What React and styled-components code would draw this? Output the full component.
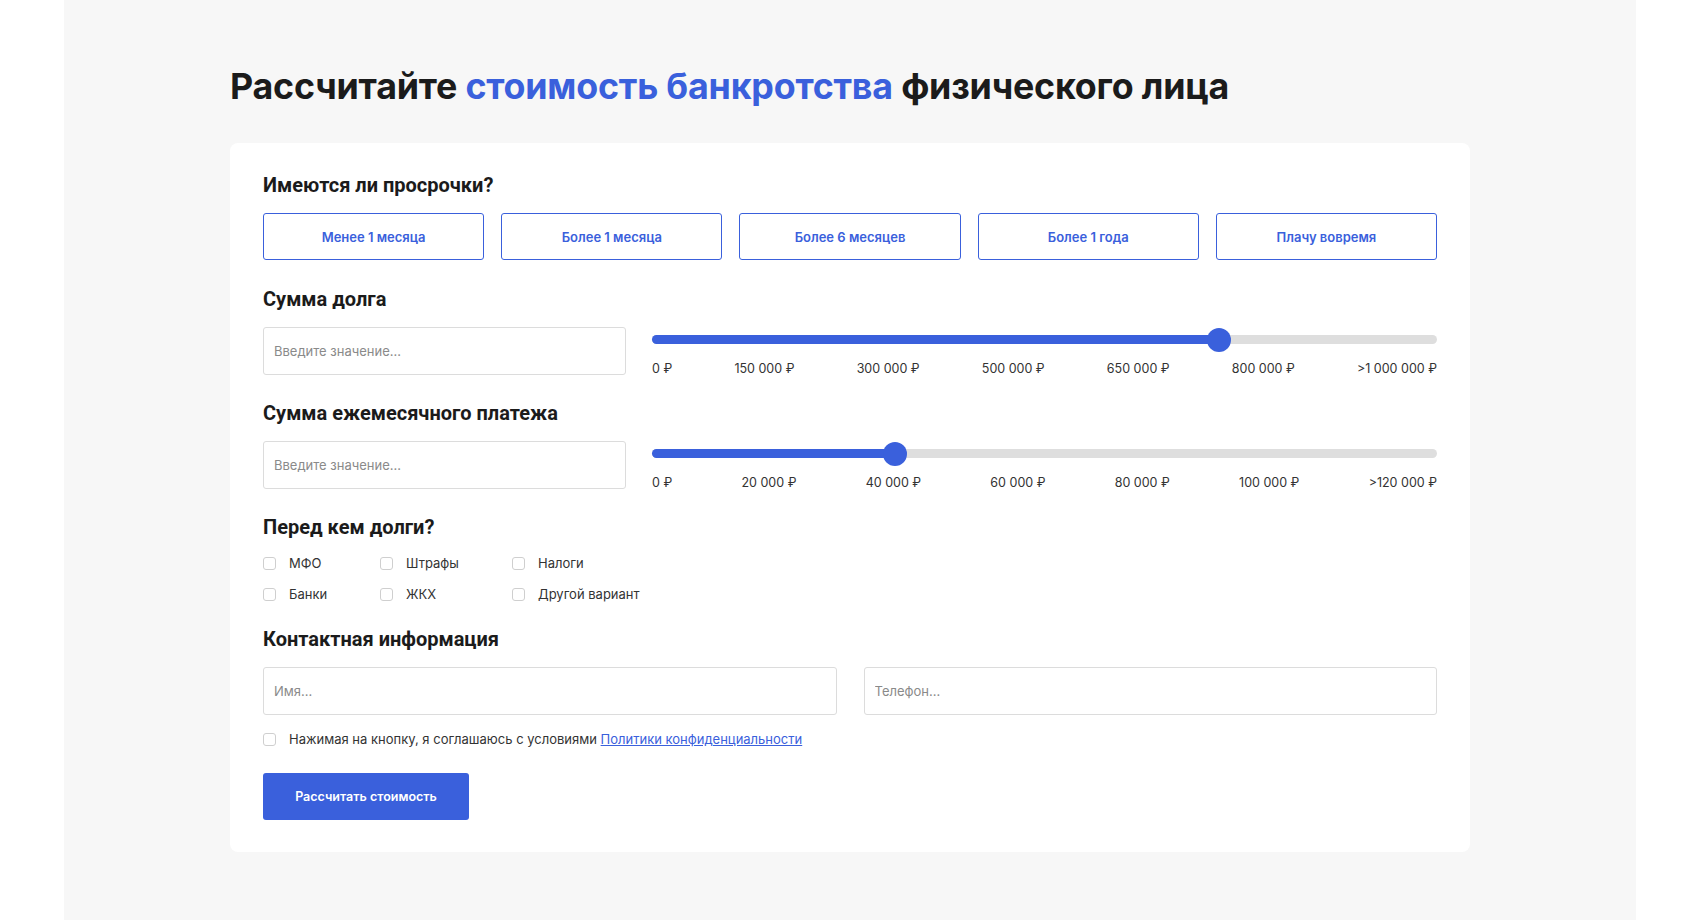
import React from "react";
import styled, { createGlobalStyle } from "styled-components";

const Global = createGlobalStyle`
  html, body { margin: 0; background: #fff; }
  * { box-sizing: border-box; }
`;
const BLUE = "#3a60dc";

const Page = styled.div`
  margin: 0 64px; min-height: 920px; background: #f7f7f7;
  padding: 64px 166px 68px 166px;
  font-family: Inter, "Noto Sans", sans-serif;
`;
const Title = styled.h1`
  margin: 0 0 35px; font-family: Inter, sans-serif; font-weight: 700; font-size: 35.8px; color: #1b1b1b; letter-spacing: -0.2px;
  span { color: ${BLUE}; }
`;
const Card = styled.div`
  background: #fff; border-radius: 8px; padding: 30px 33px 32px;
`;
const H = styled.h2`
  margin: 0 0 16px; font-family: Roboto, sans-serif; font-weight: 700; font-size: 20px; color: #1b1b1b;
`;
const Section = styled.div` margin-bottom: ${p => p.$mb ?? 24}px; `;
const Options = styled.div` display: grid; grid-template-columns: repeat(5, 1fr); gap: 17px; `;
const Opt = styled.button`
  height: 47px; background: #fff; border: 1px solid ${BLUE}; border-radius: 3px; color: ${BLUE};
  font-family: Inter, sans-serif; font-weight: 600; font-size: 13px;
`;
const Row = styled.div` display: grid; grid-template-columns: 363px 1fr; gap: 26px; align-items: start; `;
const Input = styled.input`
  width: 100%; height: 48px; border: 1px solid #dcdcdc; border-radius: 3px; padding: 0 10px;
  font-family: Inter, sans-serif; font-size: 13px; color: #333;
  &::placeholder { color: #8a8a8a; }
`;
const Slider = styled.div` padding-top: 8px; `;
const Track = styled.div`
  position: relative; height: 9px; border-radius: 5px; background: #dedede;
`;
const Fill = styled.div` height: 100%; border-radius: 5px; background: ${BLUE}; `;
const Thumb = styled.div`
  position: absolute; top: 50%; width: 24px; height: 24px; border-radius: 50%; background: ${BLUE};
  transform: translate(-50%, -50%);
`;
const Labels = styled.div`
  display: flex; justify-content: space-between; margin-top: 17px; font-size: 12.5px; color: #333;
`;
const Checks = styled.div`
  display: grid; grid-template-columns: 117px 132px auto; row-gap: 15px; justify-content: start;
`;
const Check = styled.label`
  display: flex; align-items: center; gap: 13px; font-size: 13px; color: #333;
`;
const Box = styled.span`
  width: 13px; height: 13px; border: 1px solid #cfcfcf; border-radius: 3px; flex: none;
`;
const Two = styled.div` display: grid; grid-template-columns: 1fr 1fr; gap: 27px; margin-bottom: 16px; `;
const Consent = styled(Check)` margin-bottom: 26px; a { color: ${BLUE}; } `;
const Submit = styled.button`
  width: 206px; height: 47px; border: 0; border-radius: 3px; background: ${BLUE}; color: #fff;
  font-family: Inter, sans-serif; font-weight: 600; font-size: 12.5px;
`;

function Range({ value, labels }) {
  return (
    <Slider>
      <Track>
        <Fill style={{ width: `${value}%` }} />
        <Thumb style={{ left: `${value}%` }} />
      </Track>
      <Labels>{labels.map(l => <span key={l}>{l}</span>)}</Labels>
    </Slider>
  );
}

export default function App() {
  return (
    <Page>
      <Global />
      <Title>Рассчитайте <span>стоимость банкротства</span> физического лица</Title>
      <Card>
        <Section $mb={27}>
          <H>Имеются ли просрочки?</H>
          <Options>
            {["Менее 1 месяца", "Более 1 месяца", "Более 6 месяцев", "Более 1 года", "Плачу вовремя"].map(t => <Opt key={t}>{t}</Opt>)}
          </Options>
        </Section>
        <Section $mb={25}>
          <H>Сумма долга</H>
          <Row>
            <Input placeholder="Введите значение..." />
            <Range value={72.2} labels={["0 ₽", "150 000 ₽", "300 000 ₽", "500 000 ₽", "650 000 ₽", "800 000 ₽", ">1 000 000 ₽"]} />
          </Row>
        </Section>
        <Section $mb={25}>
          <H>Сумма ежемесячного платежа</H>
          <Row>
            <Input placeholder="Введите значение..." />
            <Range value={31} labels={["0 ₽", "20 000 ₽", "40 000 ₽", "60 000 ₽", "80 000 ₽", "100 000 ₽", ">120 000 ₽"]} />
          </Row>
        </Section>
        <Section $mb={25}>
          <H>Перед кем долги?</H>
          <Checks>
            {["МФО", "Штрафы", "Налоги", "Банки", "ЖКХ", "Другой вариант"].map(t => <Check key={t}><Box />{t}</Check>)}
          </Checks>
        </Section>
        <H>Контактная информация</H>
        <Two>
          <Input placeholder="Имя..." />
          <Input placeholder="Телефон..." />
        </Two>
        <Consent><Box /><span>Нажимая на кнопку, я соглашаюсь с условиями <a href="#">Политики конфиденциальности</a></span></Consent>
        <Submit>Рассчитать стоимость</Submit>
      </Card>
    </Page>
  );
}
